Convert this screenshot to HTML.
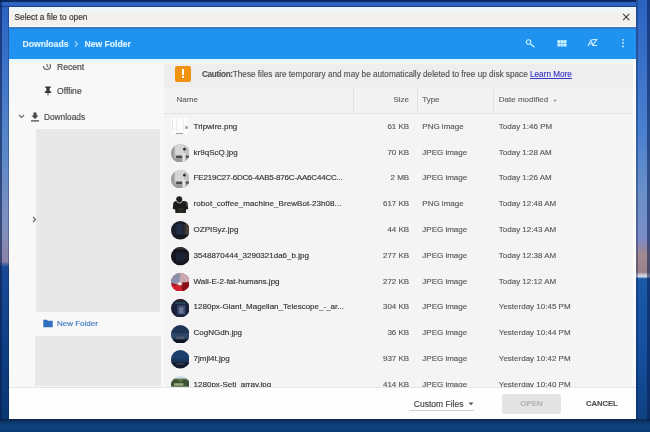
<!DOCTYPE html>
<html><head><meta charset="utf-8">
<style>
*{margin:0;padding:0;box-sizing:border-box}
html,body{width:650px;height:432px;overflow:hidden;font-family:"Liberation Sans",sans-serif}
body{position:relative;background:#1a56a8}
.a{position:absolute}
.t{position:absolute;white-space:nowrap;line-height:10px;height:10px;-webkit-text-stroke:0.15px currentColor}
</style></head><body>
<div style="position:absolute;left:0;top:0;width:650px;height:432px;will-change:transform">
<div class="a" style="left:0px;top:0px;width:650px;height:432px;background:linear-gradient(180deg,#2a62c0 0%,#3a70c8 14%,#5a88c8 35%,#8090c0 52%,#8a84a8 60.5%,#1a4a98 61.8%,#0e3f85 80%,#0a3670 100%);"></div>
<div class="a" style="left:0px;top:0px;width:650px;height:1.5px;background:#0a2a60;"></div>
<div class="a" style="left:0px;top:6px;width:650px;height:1px;background:rgba(10,30,80,0.5);"></div>
<div class="a" style="left:636px;top:0px;width:14px;height:432px;background:linear-gradient(180deg,#2a62c0 0%,#4a80d0 30%,#6a90c8 45%,#7b8cc8 55%,#8a88b0 56.7%,#a08a90 59%,#9a8088 63%,#d0d4e0 63.7%,#c8d0e0 64.1%,#1a58a8 64.5%,#1650a0 80%,#0d3f7c 100%);"></div>
<div class="a" style="left:0px;top:0px;width:1.5px;height:432px;background:rgba(10,30,80,0.6);"></div>
<div class="a" style="left:8px;top:7px;width:1px;height:412px;background:rgba(10,30,80,0.3);"></div>
<div class="a" style="left:636px;top:0px;width:2px;height:432px;background:rgba(10,30,80,0.35);"></div>
<div class="a" style="left:647px;top:0px;width:3px;height:432px;background:rgba(10,30,80,0.55);"></div>
<div class="a" style="left:0px;top:419px;width:650px;height:2px;background:rgba(10,30,60,0.6);"></div>
<div class="a" style="left:0px;top:421px;width:650px;height:11px;background:linear-gradient(180deg,#0a3566,#0c4580 60%,#0a3a70);"></div>
<div class="a" style="left:9px;top:7px;width:627px;height:412px;background:#f4f4f4;"></div>
<div class="a" style="left:9px;top:7px;width:627px;height:20px;background:linear-gradient(180deg,#eef6fa 0%,#f1f3f3 25%,#f3f1ee 40%,#f3f0ee 100%);"></div>
<div class="a" style="left:9px;top:26px;width:627px;height:1px;background:#f8fbfd;"></div>
<div class="t" style="left:14.5px;top:11.80px;font-size:8.3px;color:#333;font-weight:400;">Select a file to open</div>
<svg class="a" style="left:622px;top:13px" width="8" height="8" viewBox="0 0 8 8"><path d="M1.1 0.9L7.3 7.1M7.3 0.9L1.1 7.1" stroke="#3a3a3a" stroke-width="1.05"/></svg>
<div class="a" style="left:9px;top:59px;width:155px;height:328px;background:#f8f8f8;"></div>
<div class="a" style="left:163.5px;top:59px;width:1px;height:328px;background:#e0e0e0;"></div>
<svg class="a" style="left:42px;top:61px" width="10" height="10" viewBox="0 0 10 10"><path d="M1.5 5A3.5 3.5 0 1 0 5 1.5" stroke="#555" stroke-width="1.1" fill="none"/><path d="M5 3V5.3L6.5 6.3" stroke="#555" stroke-width="1" fill="none"/></svg>
<div class="t" style="left:57px;top:61.70px;font-size:8.6px;color:#444;font-weight:400;">Recent</div>
<svg class="a" style="left:43.5px;top:85.8px" width="8" height="10" viewBox="0 0 8 10"><path d="M1.2 0.5H6.8V1.7L5.6 2.3V4.6L7.2 5.9V6.9H0.8V5.9L2.4 4.6V2.3L1.2 1.7Z M3.5 6.9H4.5V9.2H3.5Z" fill="#3a3a3a"/></svg>
<div class="t" style="left:57px;top:86.40px;font-size:8.6px;color:#444;font-weight:400;">Offline</div>
<svg class="a" style="left:18px;top:114px" width="7" height="5" viewBox="0 0 7 5"><path d="M1 1L3.5 3.5L6 1" stroke="#666" stroke-width="1.1" fill="none"/></svg>
<svg class="a" style="left:30px;top:111.5px" width="10" height="10" viewBox="0 0 10 10"><path d="M3.5 0.5H6.5V3.5H8.5L5 7L1.5 3.5H3.5Z M1 8.2H9V9.5H1Z" fill="#444"/></svg>
<div class="t" style="left:44px;top:111.60px;font-size:8.3px;color:#484848;font-weight:400;">Downloads</div>
<div class="a" style="left:36px;top:129px;width:124px;height:183px;background:#e8e8e8;"></div>
<svg class="a" style="left:32px;top:216px" width="5" height="7" viewBox="0 0 5 7"><path d="M1 1L3.5 3.5L1 6" stroke="#666" stroke-width="1.1" fill="none"/></svg>
<svg class="a" style="left:43px;top:319px" width="10" height="9" viewBox="0 0 10 9"><path d="M0.3 0.8H3.8L4.8 1.8H9.7V8.2H0.3Z" fill="#2f6fbd"/></svg>
<div class="t" style="left:57px;top:319.29px;font-size:8px;color:#3b78c0;font-weight:400;">New Folder</div>
<div class="a" style="left:35px;top:336px;width:126px;height:50px;background:#e8e8e8;"></div>
<div class="a" style="left:164px;top:59px;width:472px;height:328px;background:#f4f4f4;"></div>
<div class="a" style="left:164px;top:59px;width:472px;height:29px;background:#eeeeee;"></div>
<div class="a" style="left:174.5px;top:65.5px;width:16px;height:16px;background:#f19110;border-radius:2px"></div>
<div class="a" style="left:181.5px;top:68.5px;width:2px;height:6px;background:#fff;"></div>
<div class="a" style="left:181.5px;top:76px;width:2px;height:2px;background:#fff;"></div>
<div class="t" style="left:202px;top:69.89px;font-size:8.2px;color:#555;font-weight:400;"><b style="letter-spacing:-0.3px">Caution:</b>These files are temporary and may be automatically deleted to free up disk space <span style="color:#3535c8;text-decoration:underline">Learn More</span></div>
<div class="a" style="left:164px;top:88px;width:472px;height:25px;background:#f3f3f3;"></div>
<div class="a" style="left:164px;top:112.5px;width:472px;height:1px;background:#e2e2e2;"></div>
<div class="a" style="left:353px;top:89px;width:1px;height:23px;background:#e2e2e2;"></div>
<div class="a" style="left:417px;top:89px;width:1px;height:23px;background:#e2e2e2;"></div>
<div class="a" style="left:493px;top:89px;width:1px;height:23px;background:#e2e2e2;"></div>
<div class="t" style="left:176.6px;top:95.09px;font-size:8px;color:#666;font-weight:400;">Name</div>
<div class="t" style="left:350px;top:95.09px;width:59px;text-align:right;font-size:8px;color:#666">Size</div>
<div class="t" style="left:422.2px;top:95.09px;font-size:8px;color:#666;font-weight:400;">Type</div>
<div class="t" style="left:498.8px;top:95.09px;font-size:8px;color:#666;font-weight:400;">Date modified</div>
<svg class="a" style="left:552px;top:99px" width="6" height="4" viewBox="0 0 6 4"><path d="M1 0.8H5L3 2.9Z" fill="#9a9a9a"/></svg>
<div class="a" style="left:170.5px;top:117.9px;width:17px;height:16.5px;background:#fbfbfb;"></div>
<div class="a" style="left:172px;top:118.9px;width:1px;height:12px;background:#e6e6e6;"></div>
<div class="a" style="left:176px;top:118.9px;width:1px;height:12px;background:#ececec;"></div>
<div class="a" style="left:183px;top:118.9px;width:1px;height:12px;background:#ececec;"></div>
<div class="a" style="left:176px;top:132.9px;width:7px;height:1.2px;background:#9a9a9a;"></div>
<div class="a" style="left:185px;top:126.4px;width:3px;height:2.5px;background:#a8a8a8;border-radius:1px"></div>
<div class="t" style="left:193.6px;top:121.89px;font-size:8px;color:#333;font-weight:400;">Tripwire.png</div>
<div class="t" style="left:350px;top:121.89px;width:59.2px;text-align:right;font-size:8px;color:#5a5a5a">61 KB</div>
<div class="t" style="left:422.3px;top:121.89px;font-size:8px;color:#5a5a5a;font-weight:400;">PNG image</div>
<div class="t" style="left:498.8px;top:121.89px;font-size:8px;color:#5a5a5a;font-weight:400;">Today 1:46 PM</div>
<svg class="a" style="left:170.79999999999998px;top:143.9px;filter:blur(0.35px)" width="18.6" height="18.6" viewBox="0 0 18 18"><defs><clipPath id="c1"><circle cx="9" cy="9" r="9"/></clipPath></defs><g clip-path="url(#c1)"><rect width="18" height="18" fill="#b4b4b4"/><rect x="4" y="0" width="9" height="11" fill="#d6d6d6"/><rect x="13" y="0" width="5" height="10" fill="#c4c4c4"/><rect x="0" y="0" width="3" height="18" fill="#a0a0a0"/><circle cx="13" cy="5" r="1.3" fill="#2a2a2a"/><rect x="5" y="11.3" width="6" height="2.4" fill="#484848"/><rect x="14" y="11.3" width="4" height="2" fill="#4a4a4a"/><rect x="11" y="9" width="3" height="9" fill="#e2e2e2"/><rect x="0" y="14" width="11" height="4" fill="#9a9a9a"/><rect x="14" y="13.5" width="4" height="4.5" fill="#a8a8a8"/></g></svg>
<div class="t" style="left:193.6px;top:147.69px;font-size:8px;color:#333;font-weight:400;">kr9qScQ.jpg</div>
<div class="t" style="left:350px;top:147.69px;width:59.2px;text-align:right;font-size:8px;color:#5a5a5a">70 KB</div>
<div class="t" style="left:422.3px;top:147.69px;font-size:8px;color:#5a5a5a;font-weight:400;">JPEG image</div>
<div class="t" style="left:498.8px;top:147.69px;font-size:8px;color:#5a5a5a;font-weight:400;">Today 1:28 AM</div>
<svg class="a" style="left:170.79999999999998px;top:169.7px;filter:blur(0.35px)" width="18.6" height="18.6" viewBox="0 0 18 18"><defs><clipPath id="c2"><circle cx="9" cy="9" r="9"/></clipPath></defs><g clip-path="url(#c2)"><rect width="18" height="18" fill="#b4b4b4"/><rect x="4" y="0" width="9" height="11" fill="#d6d6d6"/><rect x="13" y="0" width="5" height="10" fill="#c4c4c4"/><rect x="0" y="0" width="3" height="18" fill="#a0a0a0"/><circle cx="13" cy="5" r="1.3" fill="#2a2a2a"/><rect x="5" y="11.3" width="6" height="2.4" fill="#484848"/><rect x="14" y="11.3" width="4" height="2" fill="#4a4a4a"/><rect x="11" y="9" width="3" height="9" fill="#e2e2e2"/><rect x="0" y="14" width="11" height="4" fill="#9a9a9a"/><rect x="14" y="13.5" width="4" height="4.5" fill="#a8a8a8"/></g></svg>
<div class="t" style="left:193.6px;top:173.49px;font-size:8px;color:#333;font-weight:400;letter-spacing:-0.2px">FE219C27-6DC6-4AB5-876C-AA6C44CC...</div>
<div class="t" style="left:350px;top:173.49px;width:59.2px;text-align:right;font-size:8px;color:#5a5a5a">2 MB</div>
<div class="t" style="left:422.3px;top:173.49px;font-size:8px;color:#5a5a5a;font-weight:400;">JPEG image</div>
<div class="t" style="left:498.8px;top:173.49px;font-size:8px;color:#5a5a5a;font-weight:400;">Today 1:26 AM</div>
<svg class="a" style="left:171.5px;top:196.3px" width="17" height="17" viewBox="0 0 17 17"><path d="M0.8 13L1.3 7Q1.8 5.2 4 4.9L13 4.9Q15.2 5.2 15.6 7L16.2 13L14 13.6L13.8 17.2L3.4 17.2L3.2 13.6Z" fill="#1b1b1b"/><path d="M5.5 12L12 12L11.5 17L6 17Z" fill="#262a22"/><circle cx="7.2" cy="3.3" r="3" fill="#1e1e1e"/><path d="M4.2 4.2Q5 7 7.5 7Q10 7 10.6 4.5" stroke="#c4c4c4" stroke-width="0.9" fill="none"/><path d="M12.5 6L14.5 7.5L15 11" stroke="#555" stroke-width="0.8" fill="none"/></svg>
<div class="t" style="left:193.6px;top:199.29px;font-size:8px;color:#333;font-weight:400;letter-spacing:0.07px">robot_coffee_machine_BrewBot-23h08...</div>
<div class="t" style="left:350px;top:199.29px;width:59.2px;text-align:right;font-size:8px;color:#5a5a5a">617 KB</div>
<div class="t" style="left:422.3px;top:199.29px;font-size:8px;color:#5a5a5a;font-weight:400;">PNG image</div>
<div class="t" style="left:498.8px;top:199.29px;font-size:8px;color:#5a5a5a;font-weight:400;">Today 12:48 AM</div>
<svg class="a" style="left:170.79999999999998px;top:221.3px;filter:blur(0.35px)" width="18.6" height="18.6" viewBox="0 0 18 18"><defs><clipPath id="c3"><circle cx="9" cy="9" r="9"/></clipPath></defs><g clip-path="url(#c3)"><rect width="18" height="18" fill="#1a1e2a"/><rect x="5" y="3" width="6" height="10" fill="#222e44"/><rect x="14" y="2" width="4" height="11" fill="#4a4036"/><rect x="12" y="3" width="2" height="10" fill="#2e2e34"/><rect x="0" y="14" width="18" height="4" fill="#15181f"/></g></svg>
<div class="t" style="left:193.6px;top:225.09px;font-size:8px;color:#333;font-weight:400;">OZPISyz.jpg</div>
<div class="t" style="left:350px;top:225.09px;width:59.2px;text-align:right;font-size:8px;color:#5a5a5a">44 KB</div>
<div class="t" style="left:422.3px;top:225.09px;font-size:8px;color:#5a5a5a;font-weight:400;">JPEG image</div>
<div class="t" style="left:498.8px;top:225.09px;font-size:8px;color:#5a5a5a;font-weight:400;">Today 12:43 AM</div>
<svg class="a" style="left:170.79999999999998px;top:247.09999999999997px;filter:blur(0.35px)" width="18.6" height="18.6" viewBox="0 0 18 18"><defs><clipPath id="c4"><circle cx="9" cy="9" r="9"/></clipPath></defs><g clip-path="url(#c4)"><rect width="18" height="18" fill="#15161d"/><rect x="5" y="5" width="8" height="9" fill="#1c2236"/><rect x="3" y="0" width="12" height="2.5" fill="#35302e"/><rect x="12" y="6" width="4" height="6" fill="#222229"/></g></svg>
<div class="t" style="left:193.6px;top:250.89px;font-size:8px;color:#333;font-weight:400;">3548870444_3290321da6_b.jpg</div>
<div class="t" style="left:350px;top:250.89px;width:59.2px;text-align:right;font-size:8px;color:#5a5a5a">277 KB</div>
<div class="t" style="left:422.3px;top:250.89px;font-size:8px;color:#5a5a5a;font-weight:400;">JPEG image</div>
<div class="t" style="left:498.8px;top:250.89px;font-size:8px;color:#5a5a5a;font-weight:400;">Today 12:38 AM</div>
<svg class="a" style="left:170.79999999999998px;top:272.90000000000003px;filter:blur(0.35px)" width="18.6" height="18.6" viewBox="0 0 18 18"><defs><clipPath id="c5"><circle cx="9" cy="9" r="9"/></clipPath></defs><g clip-path="url(#c5)"><rect width="18" height="18" fill="#a01c24"/><polygon points="0,0 18,0 18,8 9,12 0,9" fill="#c9a8b0"/><polygon points="0,0 9,0 8,10 0,10" fill="#8a90a8"/><rect x="7" y="9" width="3" height="3" fill="#eee"/><polygon points="0,12 9,12 12,18 0,18" fill="#d02030"/><rect x="11" y="9" width="7" height="9" fill="#8a1018"/></g></svg>
<div class="t" style="left:193.6px;top:276.69px;font-size:8px;color:#333;font-weight:400;">Wall-E-2-fat-humans.jpg</div>
<div class="t" style="left:350px;top:276.69px;width:59.2px;text-align:right;font-size:8px;color:#5a5a5a">272 KB</div>
<div class="t" style="left:422.3px;top:276.69px;font-size:8px;color:#5a5a5a;font-weight:400;">JPEG image</div>
<div class="t" style="left:498.8px;top:276.69px;font-size:8px;color:#5a5a5a;font-weight:400;">Today 12:12 AM</div>
<svg class="a" style="left:170.79999999999998px;top:298.7px;filter:blur(0.35px)" width="18.6" height="18.6" viewBox="0 0 18 18"><defs><clipPath id="c6"><circle cx="9" cy="9" r="9"/></clipPath></defs><g clip-path="url(#c6)"><rect width="18" height="18" fill="#1a2038"/><rect x="6" y="6" width="8" height="9" fill="#3a4870"/><rect x="8" y="8" width="4" height="6" fill="#6a7898"/><rect x="4" y="3" width="10" height="2" fill="#264656"/><rect x="0" y="0" width="18" height="2" fill="#3a1e28"/></g></svg>
<div class="t" style="left:193.6px;top:302.49px;font-size:8px;color:#333;font-weight:400;">1280px-Giant_Magellan_Telescope_-_ar...</div>
<div class="t" style="left:350px;top:302.49px;width:59.2px;text-align:right;font-size:8px;color:#5a5a5a">304 KB</div>
<div class="t" style="left:422.3px;top:302.49px;font-size:8px;color:#5a5a5a;font-weight:400;">JPEG image</div>
<div class="t" style="left:498.8px;top:302.49px;font-size:8px;color:#5a5a5a;font-weight:400;">Yesterday 10:45 PM</div>
<svg class="a" style="left:170.79999999999998px;top:324.5px;filter:blur(0.35px)" width="18.6" height="18.6" viewBox="0 0 18 18"><defs><clipPath id="c7"><circle cx="9" cy="9" r="9"/></clipPath></defs><g clip-path="url(#c7)"><rect width="18" height="18" fill="#1e3556"/><rect x="0" y="8" width="18" height="5" fill="#2e4668"/><rect x="5" y="11" width="8" height="3" fill="#505a70"/><rect x="0" y="14" width="18" height="4" fill="#0e1622"/></g></svg>
<div class="t" style="left:193.6px;top:328.29px;font-size:8px;color:#333;font-weight:400;">CogNGdh.jpg</div>
<div class="t" style="left:350px;top:328.29px;width:59.2px;text-align:right;font-size:8px;color:#5a5a5a">36 KB</div>
<div class="t" style="left:422.3px;top:328.29px;font-size:8px;color:#5a5a5a;font-weight:400;">JPEG image</div>
<div class="t" style="left:498.8px;top:328.29px;font-size:8px;color:#5a5a5a;font-weight:400;">Yesterday 10:44 PM</div>
<svg class="a" style="left:170.79999999999998px;top:350.3px;filter:blur(0.35px)" width="18.6" height="18.6" viewBox="0 0 18 18"><defs><clipPath id="c8"><circle cx="9" cy="9" r="9"/></clipPath></defs><g clip-path="url(#c8)"><rect width="18" height="18" fill="#1b3f6c"/><rect x="0" y="9" width="18" height="4" fill="#1c3458"/><rect x="0" y="12" width="18" height="6" fill="#121a2a"/><rect x="5" y="12.5" width="8" height="1.8" fill="#343c4c"/></g></svg>
<div class="t" style="left:193.6px;top:354.09px;font-size:8px;color:#333;font-weight:400;">7jmjl4t.jpg</div>
<div class="t" style="left:350px;top:354.09px;width:59.2px;text-align:right;font-size:8px;color:#5a5a5a">937 KB</div>
<div class="t" style="left:422.3px;top:354.09px;font-size:8px;color:#5a5a5a;font-weight:400;">JPEG image</div>
<div class="t" style="left:498.8px;top:354.09px;font-size:8px;color:#5a5a5a;font-weight:400;">Yesterday 10:42 PM</div>
<svg class="a" style="left:170.79999999999998px;top:376.09999999999997px;filter:blur(0.35px)" width="18.6" height="18.6" viewBox="0 0 18 18"><defs><clipPath id="c9"><circle cx="9" cy="9" r="9"/></clipPath></defs><g clip-path="url(#c9)"><rect width="18" height="18" fill="#c8dce8"/><rect x="0" y="2.5" width="18" height="15.5" fill="#5e7648"/><polygon points="0,5 5,3 9,6 13,3.5 18,5 18,18 0,18" fill="#3e5236"/><rect x="3" y="7" width="9" height="2.5" fill="#9aac80"/><rect x="0" y="9.5" width="18" height="2" fill="#6e7e62"/><rect x="0" y="11.5" width="18" height="2.5" fill="#454845"/></g></svg>
<div class="t" style="left:193.6px;top:379.89px;font-size:8px;color:#333;font-weight:400;">1280px-Seti_array.jpg</div>
<div class="t" style="left:350px;top:379.89px;width:59.2px;text-align:right;font-size:8px;color:#5a5a5a">414 KB</div>
<div class="t" style="left:422.3px;top:379.89px;font-size:8px;color:#5a5a5a;font-weight:400;">JPEG image</div>
<div class="t" style="left:498.8px;top:379.89px;font-size:8px;color:#5a5a5a;font-weight:400;">Yesterday 10:40 PM</div>
<div class="a" style="left:9px;top:27px;width:627px;height:32px;background:#2093f0;"></div>
<div class="a" style="left:9px;top:27px;width:627px;height:2px;background:#3a7cc2;"></div>
<div class="a" style="left:9px;top:29px;width:627px;height:1px;background:#1a8ef2;"></div>
<div class="t" style="left:22.6px;top:38.80px;font-size:8.6px;color:#dcf2ff;font-weight:700;">Downloads</div>
<svg class="a" style="left:73px;top:39.5px" width="6" height="8" viewBox="0 0 6 8"><path d="M2 1.5L4.5 4L2 6.5" stroke="#a6d6fb" stroke-width="1.1" fill="none"/></svg>
<div class="t" style="left:84.5px;top:38.80px;font-size:8.6px;color:#dcf2ff;font-weight:700;">New Folder</div>
<svg class="a" style="left:523px;top:37px" width="14" height="14" viewBox="0 0 14 14"><circle cx="5.5" cy="5" r="2.25" stroke="#c4eeff" stroke-width="1.2" fill="none"/><path d="M7.2 6.7L11.6 10.2" stroke="#c4eeff" stroke-width="1.4"/></svg>
<svg class="a" style="left:556.5px;top:40px" width="11" height="8" viewBox="0 0 11 8"><g fill="#caf2ff"><rect x="0.4" y="0.1" width="2.9" height="3" /><rect x="3.5" y="0.1" width="2.9" height="3"/><rect x="6.6" y="0.1" width="2.9" height="3"/><rect x="0.4" y="3.5" width="2.9" height="3"/><rect x="3.5" y="3.5" width="2.9" height="3"/><rect x="6.6" y="3.5" width="2.9" height="3"/></g></svg>
<svg class="a" style="left:586px;top:38px" width="13" height="10" viewBox="0 0 13 10"><path d="M2 8L4.9 1.8L7.2 8M3 5.8H6.3" stroke="#c6ebff" stroke-width="1.1" fill="none"/><path d="M6.2 1.6H10.8L6.8 7.5H11.2" stroke="#c6ebff" stroke-width="1.1" fill="none"/></svg>
<svg class="a" style="left:621px;top:38px" width="4" height="11" viewBox="0 0 4 11"><g fill="#d8f2ff"><circle cx="2" cy="1.8" r="0.9"/><circle cx="2" cy="5" r="0.9"/><circle cx="2" cy="8.5" r="0.9"/></g></svg>
<div class="a" style="left:9px;top:59px;width:627px;height:2.5px;background:#e4f7ff;"></div>
<div class="a" style="left:9px;top:61.5px;width:627px;height:2.5px;background:#faf6ee;"></div>
<div class="a" style="left:633px;top:59px;width:3px;height:328px;background:#fbfbfb;"></div>
<div class="a" style="left:9px;top:387px;width:627px;height:32px;background:#fefefe;"></div>
<div class="a" style="left:9px;top:387px;width:627px;height:1px;background:#e6e6e6;"></div>
<div class="t" style="left:413.8px;top:399.10px;font-size:8.5px;color:#444;font-weight:400;">Custom Files</div>
<svg class="a" style="left:468px;top:401.5px" width="6" height="4" viewBox="0 0 6 4"><path d="M0.5 0.5H5.5L3 3.2Z" fill="#555"/></svg>
<div class="a" style="left:408.6px;top:410px;width:65px;height:1px;background:#cfcfcf;"></div>
<div class="a" style="left:502px;top:393.5px;width:59px;height:20.5px;background:#e4e4e4;border-radius:2px"></div>
<div class="t" style="left:502px;top:399.09px;width:59px;text-align:center;font-size:8px;font-weight:700;color:#b5b5b5">OPEN</div>
<div class="t" style="left:586px;top:399.09px;font-size:7.6px;color:#555;font-weight:700;">CANCEL</div>
</div></body></html>
